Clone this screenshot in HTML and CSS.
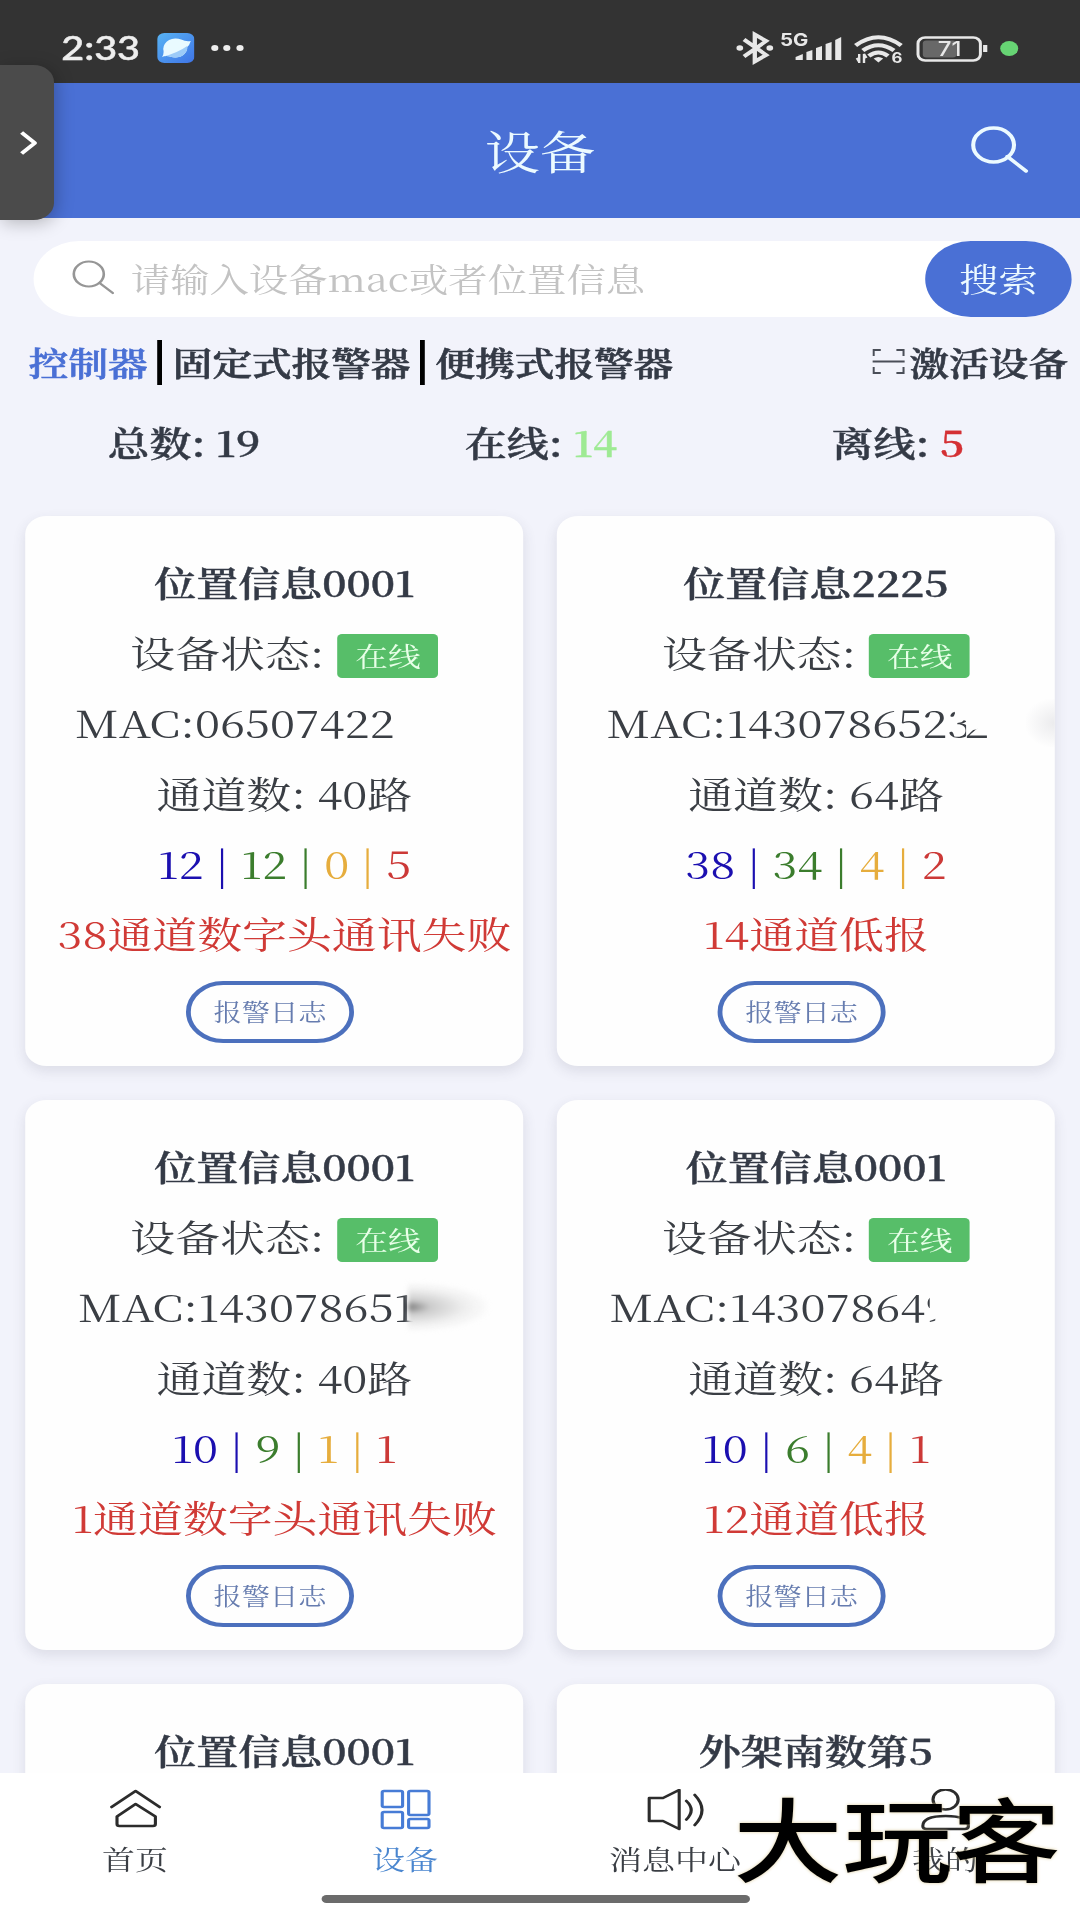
FILE: index.html
```html
<!DOCTYPE html>
<html lang="zh-CN">
<head>
<meta charset="utf-8">
<title>设备</title>
<link rel="stylesheet" href="styles.css">
</head>
<body>
<div class="screen">
  <div class="status">
    <span class="time">2:33</span>
    <svg class="app" width="31" height="30" viewBox="0 0 31 30"><defs><linearGradient id="g" x1="0" y1="0" x2="1" y2="1"><stop offset="0" stop-color="#58b4f5"/><stop offset="1" stop-color="#3f74e6"/></linearGradient></defs><rect width="31" height="30" rx="6" fill="url(#g)"/><path d="M4 24Q6 21 5 16A10.500 10.500 0 0 1 20 6.500Q24 9 28 8Q27 12 25 14A10 10 0 0 1 12 24Q7 22 4 24Z" fill="#e9faff"/><path d="M4 24Q17 20 25 13A10 10 0 0 1 12 24Q7 22 4 24Z" fill="#9ccbf8"/></svg>
    <svg width="32" height="8" viewBox="0 0 32 8" fill="#eee"><circle cx="4" cy="4" r="3"/><circle cx="14" cy="4" r="3"/><circle cx="25" cy="4" r="3"/></svg>
    <svg class="tray" width="240" height="36" viewBox="0 0 240 36" fill="none" stroke="#e8e8e8">
      <path d="M7 9.500L25.500 25 16 31.500V4.500L25.500 11 7 26.500" stroke-width="3.600"/><circle cx="3.500" cy="18" r="2.800" fill="#e8e8e8" stroke="none"/><circle cx="28.500" cy="18" r="2.800" fill="#e8e8e8" stroke="none"/>
      <text x="37" y="16.500" class="net">5G</text>
      <g fill="#e8e8e8" stroke="none"><path d="M50 30v-3l6-3v6z"/><path d="M59 30v-8l5-2v10z"/><path d="M67 30v-12l5-2v14z"/><path d="M75 30v-16l5-2v18z"/><path d="M83 30v-20l5-3v23z"/></g>
      <g stroke-width="4"><path d="M100 15.500Q119 -1 138 15.500"/><path d="M106 20.500Q119 10 132 20.500"/><path d="M111 26Q119 19 127 26"/></g>
      <path d="M119 32.500l-4-4q4-3 8 0z" fill="#e8e8e8" stroke="none"/><path d="M103 24v9M101 28l2 4M107 33v-9l2 4" stroke-width="2"/><text x="130" y="33.500" class="gen">6</text>
      <rect x="152" y="7.500" width="52" height="23" rx="6" stroke-width="2.500"/><rect x="156" y="10.500" width="28" height="17" rx="3" fill="#686868" stroke="none"/><path d="M208 15v7" stroke-width="3.500"/>
      <text x="168.500" y="26" class="charge">71</text><circle cx="228" cy="18.500" r="7.500" fill="#67d474" stroke="none"/>
    </svg>
  </div>
  <header class="header">
    <h1>设备</h1>
    <svg class="find" width="50" height="50" viewBox="0 0 50 50" fill="none" stroke="#ecfaff" stroke-width="3.400" stroke-linecap="round"><circle cx="20" cy="20" r="17"/><path d="M31.500 31.500L47 46"/></svg>
  </header>
  <main class="main">
    <div class="search">
      <svg width="36" height="36" viewBox="0 0 36 36" fill="none" stroke="#969696" stroke-width="2.200" stroke-linecap="round"><circle cx="14" cy="14" r="12.500"/><path d="M23 23L34 33"/></svg>
      <span class="hint">请输入设备mac或者位置信息</span>
      <button class="go">搜索</button>
    </div>
    <div class="tabs">
      <span class="active">控制器</span><i></i><span>固定式报警器</span><i></i><span>便携式报警器</span>
      <span class="activate"><svg width="27" height="26" viewBox="0 0 27 26" fill="none" stroke="#4a4e58" stroke-width="1.800"><path d="M1 7V1H7M20 1H26V7M26 18V24H20M7 24H1V18M0 12.500H27"/></svg>激活设备</span>
    </div>
    <div class="stats"><div>总数: 19</div><div>在线: <em class="on">14</em></div><div>离线: <em class="off">5</em></div></div>
    <div class="cards">
      <section class="card">
        <h2>位置信息0001</h2>
        <p>设备状态:<span class="tag">在线</span></p>
        <p class="mac">MAC:06507422</p>
        <p>通道数: 40路</p>
        <p><span class="c1">12 |</span> <span class="c2">12 |</span> <span class="c3">0 |</span> <span class="c4">5</span></p>
        <p class="fault">38通道数字头通讯失败</p>
        <button class="log">报警日志</button>
      </section>
      <section class="card">
        <h2>位置信息2225</h2>
        <p>设备状态:<span class="tag">在线</span></p>
        <p class="mac">MAC:143078652<span class="worn">3</span><span class="worn low">2</span><span class="haze"></span></p>
        <p>通道数: 64路</p>
        <p><span class="c1">38 |</span> <span class="c2">34 |</span> <span class="c3">4 |</span> <span class="c4">2</span></p>
        <p class="fault">14通道低报</p>
        <button class="log">报警日志</button>
      </section>
      <section class="card">
        <h2>位置信息0001</h2>
        <p>设备状态:<span class="tag">在线</span></p>
        <p class="mac in">MAC:143078651<span class="smudge"></span></p>
        <p>通道数: 40路</p>
        <p><span class="c1">10 |</span> <span class="c2">9 |</span> <span class="c3">1 |</span> <span class="c4">1</span></p>
        <p class="fault">1通道数字头通讯失败</p>
        <button class="log">报警日志</button>
      </section>
      <section class="card">
        <h2>位置信息0001</h2>
        <p>设备状态:<span class="tag">在线</span></p>
        <p class="mac in">MAC:14307864<span class="worn edge">9</span></p>
        <p>通道数: 64路</p>
        <p><span class="c1">10 |</span> <span class="c2">6 |</span> <span class="c3">4 |</span> <span class="c4">1</span></p>
        <p class="fault">12通道低报</p>
        <button class="log">报警日志</button>
      </section>
      <section class="card"><h2>位置信息0001</h2></section>
      <section class="card"><h2>外架南数第5</h2></section>
    </div>
  </main>
  <nav class="nav">
    <a><svg width="44" height="42" viewBox="-2 -2 44 42"><path d="M0 16L20 0 40 16M20 13L4.500 25.500V33Q4.500 35 6.500 35H34.500Q36.500 35 36.500 33V25.500Z"/></svg>首页</a>
    <a class="current"><svg width="44" height="42" viewBox="-2.500 -2 44 42"><rect width="17" height="16" rx="1.500"/><rect y="21" width="17" height="16" rx="1.500"/><rect x="22" width="17" height="24" rx="1.500"/><rect x="22" y="28" width="17" height="9" rx="1.500"/></svg>设备</a>
    <a><svg width="48" height="42" viewBox="-2 -1 48 42"><path d="M0 8H11.500L25 0V39L11.500 31H0ZM31 11Q39 20 31 29.500M38 5Q50 20 38 35"/></svg>消息中心</a>
    <a><svg width="44" height="42" viewBox="-2 -1 44 42"><ellipse cx="20" cy="9.500" rx="10.500" ry="10"/><path d="M1 36Q1 26 20 26T39 36Q39 39 36 39H4Q1 39 1 36Z"/></svg>我的</a>
    <span class="brand">大玩客</span>
    <span class="handle"></span>
  </nav>
  <div class="drawer"><svg width="18" height="26" viewBox="0 0 18 26"><path d="M4 2.500L15 13 4 23.500" fill="none" stroke="#fff" stroke-width="3.600" stroke-linejoin="round"/></svg></div>
</div>
</body>
</html>
```
FILE: styles.css
```css
* { box-sizing: border-box; }
html, body { margin: 0; width: 1080px; height: 1920px; overflow: hidden; }
/* 900-unit wide canvas, widened to fill the 1080px display */
.screen {
  position: relative; width: 900px; height: 1920px; overflow: hidden;
  transform: scaleX(1.2); transform-origin: 0 0;
  display: flex; flex-direction: column;
  background: #f2f3fb; color: #3a3e44;
  font-family: "Noto Serif CJK SC", "Noto Sans CJK SC", serif;
  font-weight: 400;
}
button { font-family: inherit; font-weight: 400; padding: 0; }
em { font-style: normal; }

.status { height: 83px; background: #333; display: flex; align-items: center; padding: 13px 29px 0 51px; flex: none; }
.time { font: 500 33px Lato, sans-serif; color: #eee; width: 80px; margin-top: -3px; -webkit-text-stroke: .5px #eee; }
.app { margin-right: 13px; flex: none; }
.tray { margin-left: auto; margin-right: 18px; }
.tray text { font-family: Inter, sans-serif; fill: #e8e8e8; stroke: none; }
.net { font-size: 17px; font-weight: 700; }
.gen { font-size: 14px; font-weight: 700; }
.charge { font-size: 20px; font-weight: 500; }

.header { height: 135px; flex: none; background: #4a70d5; color: #ecfaff; display: grid; grid-template-columns: 1fr auto 1fr; align-items: center; }
.header h1 { grid-column: 2; margin: 0 0 4px; font-size: 46px; font-weight: 400; line-height: 60px; }
.find { justify-self: end; margin: 0 42px 2px 0; }

.main { flex: 1; overflow: hidden; padding-top: 23px; }
.search { height: 76px; margin: 0 7px 0 28px; background: #fff; border-radius: 38px; display: flex; align-items: center; padding-left: 32px; }
.search svg { margin-top: -2px; }
.hint { font-size: 32.800px; color: #c3c3c3; margin-left: 13px; flex: 1; line-height: 74px; padding-bottom: 2px; }
.go { width: 122px; height: 76px; border: 0; border-radius: 38px; background: #4a70d5; color: #ecfaff; font-size: 32.800px; line-height: 74px; padding-bottom: 2px; }

.tabs { height: 46px; margin: 22px 10px 0 24px; display: flex; align-items: center; font-size: 33px; line-height: 46px; font-weight: 600; color: #343a46; -webkit-text-stroke: .6px; }
.tabs .active { color: #4a70d5; }
.tabs i { width: 4px; height: 45px; background: #000; margin: 0 9.500px 0 7.500px; }
.activate { margin-left: auto; display: flex; align-items: center; gap: 4px; }

.stats { display: grid; grid-template-columns: repeat(3, 297.500px); margin: 29px 0 0 4.500px; height: 56px; line-height: 56px; text-align: center; font-size: 35px; font-weight: 600; color: #343a46; -webkit-text-stroke: .4px; }
.on { color: #9eea93; }
.off { color: #d43034; }

.cards { display: grid; grid-template-columns: 415px 415px; grid-auto-rows: 550px; gap: 34px 28px; margin: 46px 0 0 21px; }
.card { background: #fefefe; border-radius: 18px; box-shadow: 0 5px 12px rgba(60, 60, 80, .12); padding: 31px 0 0 17px; display: flex; flex-direction: column; align-items: center; }
.card h2, .card p { margin: 0; height: 70.200px; line-height: 70.200px; white-space: nowrap; flex: none; }
.card h2 { font-size: 35px; font-weight: 600; color: #343a46; -webkit-text-stroke: .4px; }
.card p { font-size: 37.400px; }
.tag { display: inline-block; vertical-align: middle; width: 84px; height: 44px; line-height: 44px; margin: 0 0 6px 11px; border-radius: 4px; background: #57be69; color: #e8ffe8; font-size: 27.300px; text-align: center; }
.card .mac { align-self: stretch; padding-left: 24.500px; position: relative; }
.card .mac.in { padding-left: 27px; }
/* partly rubbed-out digits at the end of an address */
.worn { display: inline-block; vertical-align: top; clip-path: polygon(10% 0, 30% 36%, 45% 44%, 75% 48%, 75% 100%, 0 100%, 0 62%, 40% 62%, 40% 50%, 0 42%); }
.worn.low { margin-left: -7px; clip-path: polygon(0 62%, 50% 60%, 70% 56%, 100% 60%, 100% 100%, 0 100%); }
.worn.edge { clip-path: polygon(0 30%, 18% 30%, 18% 52%, 0 52%, 0 62%, 40% 62%, 40% 80%, 0 80%); }
.smudge, .haze { position: absolute; top: 12px; height: 48px; }
.smudge { left: 302px; width: 66px; background: radial-gradient(ellipse at 0 50%, #777 0, #ccc 20%, #eee 50%, transparent 75%); filter: blur(2px); }
.haze { right: 0; width: 24px; background: radial-gradient(ellipse at 100% 50%, #ebebed, transparent 75%); }
.c1 { color: #1b0fb0; }
.c2 { color: #3b7d2d; }
.c3 { color: #e6ad3d; }
.c4 { color: #cc3937; }
.card .fault { color: #d03a36; }
.log { width: 140px; height: 62px; margin: 13px 0 0 -24px; border: 4px solid #4c70bd; border-radius: 31px; background: transparent; color: #667caf; font-size: 23.500px; line-height: 52px; padding-bottom: 2px; }

.nav { position: relative; height: 147px; flex: none; background: #fff; display: grid; grid-template-columns: repeat(4, 1fr); padding-top: 16px; }
.nav a { display: flex; flex-direction: column; align-items: center; font-size: 27.500px; line-height: 40px; gap: 7px; }
.nav svg { fill: none; stroke: #2c2c2c; stroke-width: 2.600; stroke-linejoin: round; stroke-linecap: round; }
.nav .current { color: #4a86cf; }
.nav .current svg { stroke: #477cd6; }
.brand { position: absolute; left: 611px; top: 9px; font: 500 91px/106px "Noto Sans CJK SC", sans-serif; color: #000; text-shadow: 0 0 3px #d9c895; }
.handle { position: absolute; left: 268px; bottom: 17px; width: 357px; height: 8px; border-radius: 4px; background: #6b6b6b; }

.drawer { position: absolute; left: 0; top: 65px; width: 45px; height: 155px; padding-left: 14px; display: flex; align-items: center; border-radius: 0 17px 17px 0; background: #4b4b4b; box-shadow: 2px 3px 16px rgba(0, 0, 0, .25); }
```
